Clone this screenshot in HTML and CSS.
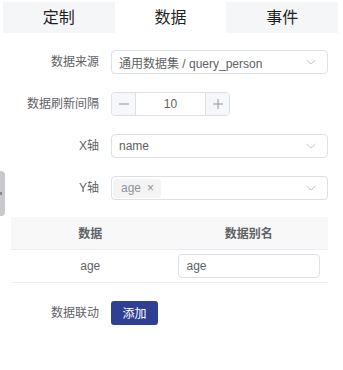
FILE: index.html
```html
<!DOCTYPE html>
<html>
<head>
<meta charset="utf-8">
<link rel="stylesheet" href="styles.css">
</head>
<body>
<div class="handle"><span class="handle-dot"></span></div>
<div class="tabs">
  <div class="tab">定制</div>
  <div class="tab active">数据</div>
  <div class="tab">事件</div>
</div>
<div class="form">
  <div class="item">
    <label class="label">数据来源</label>
    <div class="select">
      <span class="select-text">通用数据集 / query_person</span>
      <svg class="arrow" width="12" height="12" viewBox="0 0 12 12"><path d="M1.5 4 L6 8 L10.5 4" fill="none" stroke="#c0c4cc" stroke-width="1"/></svg>
    </div>
  </div>
  <div class="item">
    <label class="label">数据刷新间隔</label>
    <div class="number">
      <span class="num-btn minus"><svg width="10" height="10" viewBox="0 0 10 10"><path d="M0 5 H10" stroke="#909399" stroke-width="1"/></svg></span>
      <span class="num-val">10</span>
      <span class="num-btn plus"><svg width="10" height="10" viewBox="0 0 10 10"><path d="M0 5 H10 M5 0 V10" stroke="#909399" stroke-width="1"/></svg></span>
    </div>
  </div>
  <div class="item">
    <label class="label">X轴</label>
    <div class="select">
      <span class="select-text">name</span>
      <svg class="arrow" width="12" height="12" viewBox="0 0 12 12"><path d="M1.5 4 L6 8 L10.5 4" fill="none" stroke="#c0c4cc" stroke-width="1"/></svg>
    </div>
  </div>
  <div class="item">
    <label class="label">Y轴</label>
    <div class="select multi">
      <span class="tag">age<span class="tag-close">×</span></span>
      <svg class="arrow" width="12" height="12" viewBox="0 0 12 12"><path d="M1.5 4 L6 8 L10.5 4" fill="none" stroke="#c0c4cc" stroke-width="1"/></svg>
    </div>
  </div>
  <table class="table">
    <thead>
      <tr><th>数据</th><th>数据别名</th></tr>
    </thead>
    <tbody>
      <tr><td>age</td><td><div class="cell-input">age</div></td></tr>
    </tbody>
  </table>
  <div class="item link">
    <label class="label">数据联动</label>
    <button class="btn">添加</button>
  </div>
</div>
</body>
</html>
```
FILE: styles.css
```css
* { box-sizing: border-box; }
body {
  margin: 0;
  font-family: "Liberation Sans", "Noto Sans CJK SC", sans-serif;
  color: #606266;
  background: #fff;
  position: relative;
  width: 343px;
  height: 370px;
  overflow: hidden;
}
.handle {
  position: absolute;
  left: 0;
  top: 171px;
  width: 5px;
  height: 45px;
  background: #c8c9cc;
  border-radius: 0 4px 4px 0;
}
.handle-dot {
  position: absolute;
  left: 0;
  top: 21px;
  width: 2px;
  height: 3px;
  background: #8a8a8a;
}
.tabs {
  display: flex;
  padding: 2px 5px 0 3px;
}
.tab {
  flex: 1;
  height: 31px;
  line-height: 31px;
  text-align: center;
  font-size: 16px;
  color: #1f1f1f;
  background: #f5f6f8;
}
.tab.active { background: #fff; }
.form {
  padding: 17px 15px 0 11px;
}
.item {
  display: flex;
  align-items: center;
  margin-bottom: 18px;
  height: 24px;
}
.label {
  width: 100px;
  padding-right: 12px;
  text-align: right;
  font-size: 12px;
  line-height: 24px;
  color: #606266;
  flex-shrink: 0;
}
.select {
  flex: 1;
  height: 24px;
  border: 1px solid #dcdfe6;
  border-radius: 4px;
  display: flex;
  align-items: center;
  padding: 0 8px 0 7px;
  font-size: 12px;
  color: #606266;
}
.select-text { flex: 1; }
.select.multi { padding-left: 1px; }
.select.multi .tag { margin-right: auto; }
.arrow { flex-shrink: 0; margin-right: 2px; }
.tag {
  display: inline-flex;
  align-items: center;
  height: 19px;
  padding: 0 7px 0 8px;
  background: #f4f4f5;
  border-radius: 4px;
  color: #909399;
  font-size: 12px;
}
.tag-close {
  margin-left: 6px;
  font-size: 12px;
  color: #909399;
}
.number {
  width: 119px;
  height: 24px;
  border: 1px solid #dcdfe6;
  border-radius: 4px;
  display: flex;
  overflow: hidden;
}
.num-btn {
  width: 24px;
  background: #f5f7fa;
  display: flex;
  align-items: center;
  justify-content: center;
}
.num-btn.minus { border-right: 1px solid #dcdfe6; }
.num-btn.plus { border-left: 1px solid #dcdfe6; }
.num-val {
  flex: 1;
  text-align: center;
  line-height: 22px;
  font-size: 12px;
  color: #606266;
}
.table {
  width: 317px;
  border-collapse: collapse;
  font-size: 12px;
  margin-top: -1px;
  margin-bottom: 18px;
}
.table th {
  width: 50%;
  height: 32px;
  background: #f8f8f9;
  font-weight: 600;
  color: #606266;
  text-align: center;
  border-bottom: 1px solid #ebeef5;
}
.table td {
  height: 33px;
  text-align: center;
  border-bottom: 1px solid #ebeef5;
  color: #606266;
  padding: 0 8px;
}
.cell-input {
  height: 24px;
  line-height: 22px;
  border: 1px solid #dcdfe6;
  border-radius: 4px;
  text-align: left;
  padding-left: 8px;
  font-size: 12px;
}
.btn {
  width: 47px;
  height: 24px;
  background: #2f3f94;
  border: none;
  border-radius: 3px;
  color: #fff;
  font-size: 12px;
  font-family: inherit;
  padding: 0;
}
```
